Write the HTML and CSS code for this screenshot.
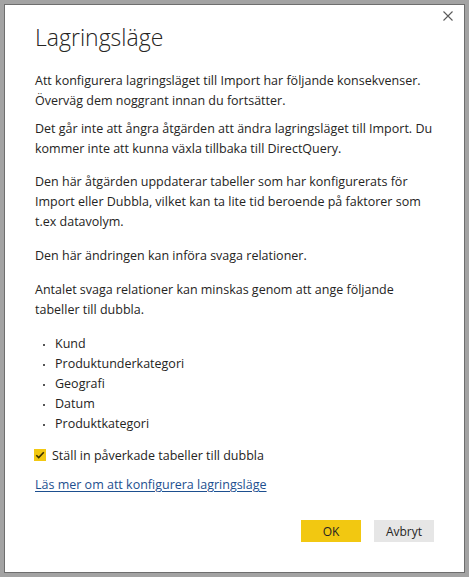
FILE: index.html
```html
<!DOCTYPE html>
<html lang="sv">
<head>
<meta charset="utf-8">
<title>Lagringsläge</title>
<link rel="stylesheet" href="styles.css">
</head>
<body>
<div class="dialog">
  <button class="close" aria-label="Stäng">
    <svg width="10" height="10" viewBox="0 0 10 10"><path d="M0.5 0.5 L9.5 9.5 M9.5 0.5 L0.5 9.5" stroke="#5a5a5a" stroke-width="1.1" fill="none"/></svg>
  </button>
  <div class="content">
    <h1 class="title">Lagringsläge</h1>
    <p class="para para-first">Att konfigurera lagringsläget till Import har följande konsekvenser.<br>Överväg dem noggrant innan du fortsätter.</p>
    <p class="para para-second">Det går inte att ångra åtgärden att ändra lagringsläget till Import. Du<br>kommer inte att kunna växla tillbaka till DirectQuery.</p>
    <p class="para">Den här åtgärden uppdaterar tabeller som har konfigurerats för<br>Import eller Dubbla, vilket kan ta lite tid beroende på faktorer som<br>t.ex datavolym.</p>
    <p class="para">Den här ändringen kan införa svaga relationer.</p>
    <p class="para">Antalet svaga relationer kan minskas genom att ange följande<br>tabeller till dubbla.</p>
    <ul class="tables">
      <li class="table-item">Kund</li>
      <li class="table-item">Produktunderkategori</li>
      <li class="table-item">Geografi</li>
      <li class="table-item">Datum</li>
      <li class="table-item">Produktkategori</li>
    </ul>
    <label class="check-row">
      <span class="checkbox">
        <svg width="12" height="12" viewBox="0 0 12 12"><path d="M2.3 6.2 L4.7 8.6 L9.8 3.2" stroke="#3a3100" stroke-width="1.6" fill="none"/></svg>
      </span>
      <span class="check-label">Ställ in påverkade tabeller till dubbla</span>
    </label>
    <a class="learn-link" href="#">Läs mer om att konfigurera lagringsläge</a>
    <div class="actions">
      <button class="btn btn-primary">OK</button>
      <button class="btn btn-secondary">Avbryt</button>
    </div>
  </div>
</div>
</body>
</html>
```
FILE: styles.css
```css
html, body {
  margin: 0;
  padding: 0;
}
body {
  background: #a3a3a3;
  width: 469px;
  height: 577px;
  padding: 4px;
  box-sizing: border-box;
  overflow: hidden;
  font-family: "Open Sans", "Noto Sans", "Liberation Sans", sans-serif;
  color: #252423;
}
.dialog {
  position: relative;
  height: 569px;
  box-sizing: border-box;
  background: #ffffff;
  border: 1px solid #6e6e6e;
  overflow: hidden;
}
.close {
  position: absolute;
  top: 6px;
  right: 11px;
  width: 10px;
  height: 10px;
  padding: 0;
  border: 0;
  background: transparent;
  display: flex;
}
.content {
  padding: 16px 30px 0 30px;
  display: flex;
  flex-direction: column;
}
.title {
  margin: 0 0 18px 0;
  font-size: 23px;
  line-height: 32px;
  font-weight: 300;
  color: #252423;
}
.para {
  margin: 0 0 14px 0;
  font-size: 12.5px;
  line-height: 20px;
  white-space: nowrap;
}
.para-first {
  margin-bottom: 8px;
}
.para-second {
  margin-bottom: 13px;
}
.tables {
  list-style: none;
  margin: 0 0 11px 0;
  padding: 0;
}
.table-item {
  position: relative;
  padding-left: 20px;
  font-size: 12.5px;
  line-height: 20px;
}
.table-item::before {
  content: "";
  position: absolute;
  left: 8px;
  top: 10px;
  width: 2px;
  height: 2px;
  background: #555;
}
.check-row {
  display: flex;
  align-items: center;
  gap: 6px;
  height: 20px;
  margin-bottom: 10px;
  font-size: 12.5px;
}
.checkbox {
  width: 12px;
  height: 12px;
  background: #f2c811;
  display: flex;
  margin-left: -1px;
}
.learn-link {
  align-self: flex-start;
  font-size: 12.5px;
  line-height: 20px;
  color: #1d4f8f;
  text-decoration: underline;
  text-underline-offset: 2px;
}
.actions {
  margin-top: 25px;
  display: flex;
  justify-content: flex-end;
  gap: 13px;
}
.btn {
  width: 60px;
  height: 22px;
  border: 0;
  padding: 0;
  font-family: inherit;
  font-size: 12px;
  color: #252423;
}
.btn-primary {
  background: #f2c811;
}
.btn-secondary {
  background: #e6e6e6;
}
```
